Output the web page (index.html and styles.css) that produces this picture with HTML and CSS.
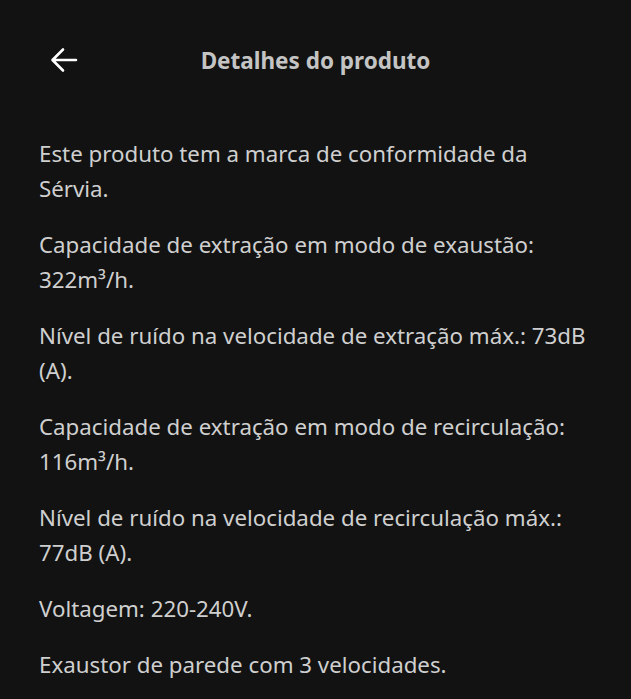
FILE: index.html
```html
<!DOCTYPE html>
<html lang="pt">
<head>
<meta charset="utf-8">
<title>Detalhes do produto</title>
<link rel="stylesheet" href="styles.css">
</head>
<body>
<header class="topbar">
  <button class="back" aria-label="Voltar">
    <svg width="28" height="26" viewBox="0 0 28 26" fill="none" stroke="#ffffff" stroke-width="2.6" stroke-linecap="round" stroke-linejoin="round">
      <path d="M26 13H3M13 2.5L2.5 13L13 23.5"/>
    </svg>
  </button>
  <h1 class="title">Detalhes do produto</h1>
  <span class="spacer"></span>
</header>
<main class="content">
  <p>Este produto tem a marca de conformidade da Sérvia.</p>
  <p>Capacidade de extração em modo de exaustão: 322m³/h.</p>
  <p>Nível de ruído na velocidade de extração máx.: 73dB (A).</p>
  <p>Capacidade de extração em modo de recirculação: 116m³/h.</p>
  <p>Nível de ruído na velocidade de recirculação máx.: 77dB (A).</p>
  <p>Voltagem: 220-240V.</p>
  <p>Exaustor de parede com 3 velocidades.</p>
</main>
</body>
</html>
```
FILE: styles.css
```css
html, body {
  margin: 0;
  padding: 0;
  background: #121212;
}
body {
  font-family: "Noto Sans", "Open Sans", sans-serif;
  color: #cfcfcf;
  width: 631px;
  min-height: 699px;
}
.topbar {
  display: grid;
  grid-template-columns: 100px 1fr 100px;
  align-items: center;
  height: 120px;
}
.back {
  background: none;
  border: 0;
  padding: 0 0 0 50px;
  display: flex;
  align-items: center;
  height: 40px;
  cursor: pointer;
}
.title {
  margin: 0;
  text-align: center;
  font-size: 22.5px;
  font-weight: 700;
  color: #c4c4c4;
}
.content {
  padding: 16px 40px 0 39px;
  display: flex;
  flex-direction: column;
  gap: 21px;
}
.content p {
  margin: 0;
  font-size: 22.3px;
  line-height: 35px;
}
```
